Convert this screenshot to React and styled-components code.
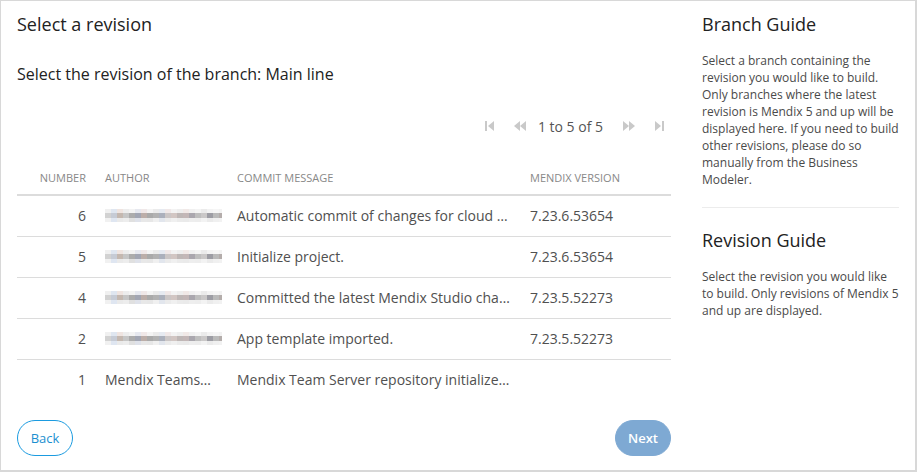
import React from 'react';
import styled, { createGlobalStyle } from 'styled-components';

const GlobalStyle = createGlobalStyle`
  html, body {
    margin: 0;
    padding: 0;
    background: #fff;
  }
  * {
    box-sizing: border-box;
  }
`;

const Frame = styled.div`
  width: 917px;
  height: 472px;
  border-style: solid;
  border-color: #d8d8d8;
  border-width: 1px 2px 2px 1px;
  display: grid;
  grid-template-columns: 670px 214px;
  column-gap: 31px;
  font-family: "Open Sans", "Noto Sans", sans-serif;
  color: #333;
  overflow: hidden;
`;

const Main = styled.section`
  padding: 12px 0 0 16px;
  display: flex;
  flex-direction: column;
`;

const Title = styled.h1`
  margin: 0;
  font-size: 18px;
  font-weight: 400;
  line-height: 22px;
  color: #222;
`;

const Subtitle = styled.h2`
  margin: 29px 0 0;
  font-size: 16px;
  font-weight: 400;
  line-height: 20px;
  color: #222;
`;

const Pager = styled.div`
  display: flex;
  align-items: center;
  justify-content: flex-end;
  margin-top: 32px;
  height: 20px;
  color: #555;
  font-size: 14px;
`;

const PagerButton = styled.span`
  display: inline-flex;
  align-items: center;
  justify-content: center;
  width: 12px;
  margin: ${({ $m }) => $m};
  color: #c9c9c9;
`;

const PagerText = styled.span`
  margin: 0 4px;
`;

const Table = styled.table`
  width: 654px;
  margin-top: 25px;
  border-collapse: collapse;
  table-layout: fixed;
`;

const Th = styled.th`
  font-size: 11px;
  font-weight: 400;
  color: #888;
  text-transform: uppercase;
  text-align: ${({ $right }) => ($right ? 'right' : 'left')};
  padding: 0 ${({ $right }) => ($right ? '9px' : '10px')} 0 ${({ $right }) => ($right ? '0' : '10px')};
  height: 34px;
  border-bottom: 2px solid #dcdcdc;
  white-space: nowrap;
`;

const Td = styled.td`
  font-size: 14px;
  color: #505050;
  text-align: ${({ $right }) => ($right ? 'right' : 'left')};
  padding: 0 ${({ $right }) => ($right ? '9px' : '10px')} 0 ${({ $right }) => ($right ? '0' : '10px')};
  height: 41px;
  border-bottom: ${({ $last }) => ($last ? 'none' : '1px solid #dcdcdc')};
  white-space: nowrap;
  overflow: hidden;
  text-overflow: ellipsis;
`;

const Actions = styled.div`
  display: flex;
  justify-content: space-between;
  width: 654px;
  margin-top: 20px;
`;

const Button = styled.button`
  height: 36px;
  width: 56px;
  border-radius: 18px;
  font-family: inherit;
  font-size: 13px;
  padding: 0;
  cursor: pointer;
  border: 1px solid ${({ $primary }) => ($primary ? '#7ea9d3' : '#1b9be0')};
  background: ${({ $primary }) => ($primary ? '#7ea9d3' : '#fff')};
  color: ${({ $primary }) => ($primary ? '#fff' : '#1b8fd0')};
  font-weight: ${({ $primary }) => ($primary ? 600 : 400)};
`;

const Side = styled.aside`
  padding: 12px 17px 0 0;
`;

const SideTitle = styled.h3`
  margin: 0;
  font-size: 18px;
  font-weight: 400;
  line-height: 22px;
  color: #222;
`;

const SideText = styled.p`
  margin: 17px 0 0;
  font-size: 12px;
  line-height: 17px;
  color: #4a4a4a;
`;

const Divider = styled.hr`
  border: 0;
  border-top: 1px solid #ececec;
  margin: 19px 0 21px;
`;

const Mosaic = styled.svg`
  display: block;
  width: 117px;
  height: 13px;
`;

const Icon = ({ kind }) => {
  const shapes = {
    first: (
      <>
        <rect x="1" y="1" width="2" height="10" />
        <path d="M10 1 L4 6 L10 11 Z" />
      </>
    ),
    prev: (
      <>
        <path d="M6 1 L0 6 L6 11 Z" />
        <path d="M12 1 L6 6 L12 11 Z" />
      </>
    ),
    next: (
      <>
        <path d="M0 1 L6 6 L0 11 Z" />
        <path d="M6 1 L12 6 L6 11 Z" />
      </>
    ),
    last: (
      <>
        <path d="M2 1 L8 6 L2 11 Z" />
        <rect x="9" y="1" width="2" height="10" />
      </>
    ),
  };
  return (
    <svg width="12" height="12" viewBox="0 0 12 12" fill="currentColor">
      {shapes[kind]}
    </svg>
  );
};

// pixelated (redacted) author name
const mosaicColors = [
  ['#f0f0f0', '#dfe6f0', '#efe4e0', '#ededed', '#f3f3f3', '#e6e8ef', '#f0e8e8', '#f4f4f4', '#ebebeb', '#e6eaf1', '#f0e8e8', '#f3f3f3', '#eeeeee', '#f1e9e7', '#f0f0f0', '#f4f4f4', '#ebebeb', '#f3f3f3', '#f6f6f6', '#f3f3f3'],
  ['#d2d2d2', '#c6cbd5', '#c4b8b0', '#c6c6c6', '#acacac', '#a2a6b3', '#bcaea9', '#aaaaaa', '#b2b2b2', '#abb0bc', '#cbc6c6', '#d2c6c3', '#beb7b6', '#c3b7b7', '#aaa7ae', '#bebebe', '#cac8c8', '#9d9da4', '#bababa', '#b4adab'],
  ['#f1f1f1', '#dfe6f1', '#eaeaea', '#ededed', '#e0e0e0', '#dfe2ea', '#e8e8e8', '#e7e7e7', '#f0f0f0', '#e2e6ed', '#ebebeb', '#f0f0f0', '#ebebeb', '#eaeaea', '#eeeeee', '#ededed', '#f3f3f3', '#ebebeb', '#f0f0f0', '#f2f2f2'],
];

const rowY = [0, 4, 9];
const rowH = [4, 5, 4];

const Blurred = () => (
  <Mosaic viewBox="0 0 117 13" preserveAspectRatio="none">
    {mosaicColors.map((row, r) =>
      row.map((c, i) => (
        <rect key={`${r}-${i}`} x={i * 6} y={rowY[r]} width="6" height={rowH[r]} fill={c} />
      ))
    )}
  </Mosaic>
);

const rows = [
  { number: 6, author: null, message: 'Automatic commit of changes for cloud portal build', version: '7.23.6.53654' },
  { number: 5, author: null, message: 'Initialize project.', version: '7.23.6.53654' },
  { number: 4, author: null, message: 'Committed the latest Mendix Studio changes', version: '7.23.5.52273' },
  { number: 2, author: null, message: 'App template imported.', version: '7.23.5.52273' },
  { number: 1, author: 'Mendix Teamserver', message: 'Mendix Team Server repository initialized by Mendix', version: '' },
];

const App = () => (
  <>
    <GlobalStyle />
    <Frame>
      <Main>
        <Title>Select a revision</Title>
        <Subtitle>Select the revision of the branch: Main line</Subtitle>

        <Pager>
          <PagerButton $m="0 18px 0 0"><Icon kind="first" /></PagerButton>
          <PagerButton $m="0 8px 0 0"><Icon kind="prev" /></PagerButton>
          <PagerText>1 to 5 of 5</PagerText>
          <PagerButton $m="0 0 0 16px"><Icon kind="next" /></PagerButton>
          <PagerButton $m="0 6px 0 18px"><Icon kind="last" /></PagerButton>
        </Pager>

        <Table>
          <colgroup>
            <col style={{ width: 78 }} />
            <col style={{ width: 132 }} />
            <col style={{ width: 293 }} />
            <col style={{ width: 151 }} />
          </colgroup>
          <thead>
            <tr>
              <Th $right>Number</Th>
              <Th>Author</Th>
              <Th>Commit message</Th>
              <Th>Mendix version</Th>
            </tr>
          </thead>
          <tbody>
            {rows.map((row, i) => {
              const last = i === rows.length - 1;
              return (
                <tr key={row.number}>
                  <Td $right $last={last}>{row.number}</Td>
                  <Td $last={last}>{row.author ? row.author : <Blurred />}</Td>
                  <Td $last={last}>{row.message}</Td>
                  <Td $last={last}>{row.version}</Td>
                </tr>
              );
            })}
          </tbody>
        </Table>

        <Actions>
          <Button>Back</Button>
          <Button $primary>Next</Button>
        </Actions>
      </Main>

      <Side>
        <SideTitle>Branch Guide</SideTitle>
        <SideText>
          Select a branch containing the revision you would like to build. Only branches where the
          latest revision is Mendix 5 and up will be displayed here. If you need to build other
          revisions, please do so manually from the Business Modeler.
        </SideText>
        <Divider />
        <SideTitle>Revision Guide</SideTitle>
        <SideText>
          Select the revision you would like to build. Only revisions of Mendix 5 and up are
          displayed.
        </SideText>
      </Side>
    </Frame>
  </>
);

export default App;
